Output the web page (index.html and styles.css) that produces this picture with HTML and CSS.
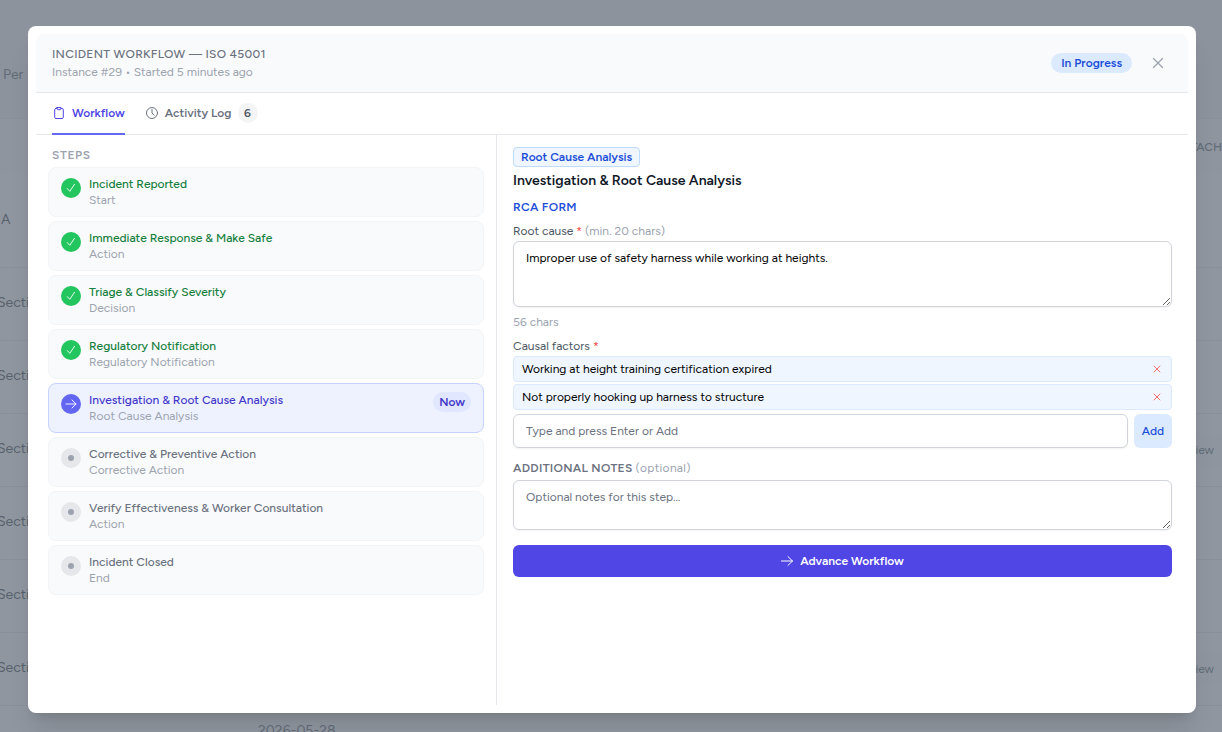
FILE: index.html
```
<!DOCTYPE html>
<html lang="en">
<head>
  <meta charset="UTF-8" />
  <meta name="viewport" content="width=device-width, initial-scale=1.0" />
  <title>Incident Workflow</title>
  <link rel="stylesheet" href="styles.css">
</head>
<body>
  <!-- Incident list behind the modal -->
  <div class="page">
    <div class="page-filters"><span>Per</span></div>
    <div class="row row-head"><span></span><span></span><span class="attach">ATTACH</span></div>
    <div class="row row-first"><span class="cell-a">A</span><span></span><span></span></div>
    <div class="row"><span class="section">Section</span><span></span><span></span></div>
    <div class="row"><span class="section">Section</span><span></span><span></span></div>
    <div class="row"><span class="section">Section</span><span></span><span class="view">View</span></div>
    <div class="row"><span class="section">Section</span><span></span><span></span></div>
    <div class="row"><span class="section">Section</span><span></span><span></span></div>
    <div class="row"><span class="section">Section</span><span></span><span class="view">View</span></div>
    <div class="row row-last"><span></span><span class="date">2026-05-28</span><span></span></div>
  </div>

  <div class="overlay">
    <div class="modal">
      <header class="modal-header">
        <div>
          <h2>Incident Workflow — ISO 45001</h2>
          <p class="meta">Instance #29 • Started 5 minutes ago</p>
        </div>
        <div class="header-right">
          <span class="status">In Progress</span>
          <button class="close" aria-label="Close">
            <svg width="12" height="12" viewBox="0 0 12 12"><path d="M1.5 1.5l9 9M10.5 1.5l-9 9" /></svg>
          </button>
        </div>
      </header>

      <nav class="tabs">
        <a class="tab active">
          <svg width="14" height="14" viewBox="0 0 14 14"><path d="M5 2.500H4a1.300 1.300 0 0 0-1.300 1.300v7.400A1.300 1.300 0 0 0 4 12.500h6a1.300 1.300 0 0 0 1.300-1.300V3.800A1.300 1.300 0 0 0 10 2.500H9M5 1.500h4v1L8.300 3.700H5.700L5 2.500z" /></svg>
          <span>Workflow</span>
        </a>
        <a class="tab">
          <svg width="14" height="14" viewBox="0 0 14 14"><circle cx="7" cy="7" r="5.500" /><path d="M7 3.500V7l2 2.200" /></svg>
          <span>Activity Log</span>
          <span class="count">6</span>
        </a>
      </nav>

      <div class="modal-body">
        <aside class="steps">
          <h3>Steps</h3>
          <ul>
            <li class="step done">
              <span class="dot"><svg width="12" height="12" viewBox="0 0 12 12"><path d="M2.300 6.600l2.500 2.700L9.500 2.300" /></svg></span>
              <div><p class="name">Incident Reported</p><p class="type">Start</p></div>
            </li>
            <li class="step done">
              <span class="dot"><svg width="12" height="12" viewBox="0 0 12 12"><path d="M2.300 6.600l2.500 2.700L9.500 2.300" /></svg></span>
              <div><p class="name">Immediate Response &amp; Make Safe</p><p class="type">Action</p></div>
            </li>
            <li class="step done">
              <span class="dot"><svg width="12" height="12" viewBox="0 0 12 12"><path d="M2.300 6.600l2.500 2.700L9.500 2.300" /></svg></span>
              <div><p class="name">Triage &amp; Classify Severity</p><p class="type">Decision</p></div>
            </li>
            <li class="step done">
              <span class="dot"><svg width="12" height="12" viewBox="0 0 12 12"><path d="M2.300 6.600l2.500 2.700L9.500 2.300" /></svg></span>
              <div><p class="name">Regulatory Notification</p><p class="type">Regulatory Notification</p></div>
            </li>
            <li class="step current">
              <span class="dot"><svg width="12" height="12" viewBox="0 0 12 12"><path d="M1 6h10M7 2l4 4-4 4" /></svg></span>
              <div><p class="name">Investigation &amp; Root Cause Analysis</p><p class="type">Root Cause Analysis</p></div>
              <span class="now">Now</span>
            </li>
            <li class="step">
              <span class="dot"></span>
              <div><p class="name">Corrective &amp; Preventive Action</p><p class="type">Corrective Action</p></div>
            </li>
            <li class="step">
              <span class="dot"></span>
              <div><p class="name">Verify Effectiveness &amp; Worker Consultation</p><p class="type">Action</p></div>
            </li>
            <li class="step">
              <span class="dot"></span>
              <div><p class="name">Incident Closed</p><p class="type">End</p></div>
            </li>
          </ul>
        </aside>

        <section class="detail">
          <span class="tag">Root Cause Analysis</span>
          <h3 class="title">Investigation &amp; Root Cause Analysis</h3>
          <h4 class="form-title">RCA Form</h4>

          <label class="label" for="rootCause">Root cause <span class="required">*</span> <span class="hint">(min. 20 chars)</span></label>
          <textarea id="rootCause" class="root-cause">Improper use of safety harness while working at heights.</textarea>
          <p class="chars">56 chars</p>

          <label class="label" for="factor">Causal factors <span class="required">*</span></label>
          <ul class="factors">
            <li>
              <span>Working at height training certification expired</span>
              <button class="remove" aria-label="Remove"><svg width="8" height="8" viewBox="0 0 8 8"><path d="M1 1l6 6M7 1L1 7" /></svg></button>
            </li>
            <li>
              <span>Not properly hooking up harness to structure</span>
              <button class="remove" aria-label="Remove"><svg width="8" height="8" viewBox="0 0 8 8"><path d="M1 1l6 6M7 1L1 7" /></svg></button>
            </li>
          </ul>
          <div class="add-row">
            <input type="text" id="factor" placeholder="Type and press Enter or Add" />
            <button class="add">Add</button>
          </div>

          <label class="notes-label" for="notes"><span class="upper">Additional Notes</span> <span class="hint">(optional)</span></label>
          <textarea id="notes" class="notes" placeholder="Optional notes for this step…"></textarea>

          <button class="advance">
            <svg width="12" height="12" viewBox="0 0 12 12"><path d="M.5 6h11M7 1.600L11.500 6 7 10.400" /></svg>
            <span>Advance Workflow</span>
          </button>
        </section>
      </div>
    </div>
  </div>
</body>
</html>
```

FILE: styles.css
```
* {
  box-sizing: border-box;
}
body {
  margin: 0;
  height: 732px;
  overflow: hidden;
  font-family: Figtree, Inter, sans-serif;
  font-size: 12px;
  line-height: 16px;
  color: #000;
}
h2, h3, h4, p, ul {
  margin: 0;
  padding: 0;
  font-size: 12px;
  list-style: none;
}
button, input, textarea {
  font: inherit;
}
button {
  border: none;
  padding: 0;
  background: none;
  cursor: pointer;
}
svg {
  fill: none;
  stroke: currentColor;
  stroke-linecap: round;
  stroke-linejoin: round;
  flex-shrink: 0;
}

/* page behind */
.page {
  height: 732px;
  overflow: hidden;
  background: #f3f4f6;
  color: #1f2937;
  font-size: 14px;
}
.page-filters {
  height: 118px;
  padding: 67px 0 0 3px;
  color: #4b5563;
}
.row {
  height: 73px;
  display: grid;
  grid-template-columns: 258px 1fr 46px;
  align-items: center;
  background: #fff;
  border-top: 1px solid #e5e7eb;
  white-space: nowrap;
}
.row-head {
  height: 56px;
  background: #f9fafb;
}
.row-first {
  height: 93px;
  padding-bottom: 2px;
  border-top: none;
}
.row-last {
  align-items: start;
  padding-top: 17px;
}
.cell-a {
  padding-left: 1px;
}
.section {
  margin: -2px 0 0 -3px;
}
.attach {
  font-size: 12px;
  font-weight: 500;
  color: #4b5563;
  justify-self: end;
}
.view {
  font-size: 12px;
  color: #4b5563;
  justify-self: end;
  margin-right: -1px;
  padding: 8px 9px;
  background: #f9fafb;
}
.date {
  color: #4b5563;
}

.overlay {
  position: absolute;
  inset: 0;
  padding: 26px 26px 19px 28px;
  background: rgba(105, 115, 127, 0.75);
}
.modal {
  height: 100%;
  padding: 8px;
  display: flex;
  flex-direction: column;
  background: #fff;
  border-radius: 8px;
  box-shadow: 0 20px 25px -5px rgba(0, 0, 0, 0.1), 0 8px 10px -6px rgba(0, 0, 0, 0.1);
}

.modal-header {
  height: 59px;
  padding: 0 16px;
  display: flex;
  align-items: center;
  justify-content: space-between;
  background: #f9fafb;
  border-bottom: 1px solid #e5e7eb;
  border-radius: 8px 8px 0 0;
}
.modal-header h2 {
  margin-bottom: 2px;
  font-weight: 500;
  color: #6b7280;
  text-transform: uppercase;
  letter-spacing: 0.3px;
}
.meta {
  color: #9ca3af;
}
.header-right {
  display: flex;
  align-items: center;
  gap: 20px;
}
.status {
  padding: 2px 10px;
  border-radius: 10px;
  background: #dbeafe;
  color: #1d4ed8;
  font-weight: 600;
}
.close {
  width: 12px;
  height: 12px;
  margin-right: 8px;
  display: flex;
  color: #9ca3af;
  stroke-width: 1.3;
}

.tabs {
  height: 42px;
  padding: 0 16px;
  display: flex;
  gap: 20px;
  border-bottom: 1px solid #e5e7eb;
}
.tab {
  height: 42px;
  display: flex;
  align-items: center;
  gap: 6px;
  border-bottom: 2px solid transparent;
  font-weight: 600;
  color: #6b7280;
}
.tab.active {
  border-color: #6366f1;
  color: #4f46e5;
}
.count {
  width: 20px;
  height: 20px;
  border-radius: 10px;
  background: #f3f4f6;
  color: #4b5563;
  line-height: 20px;
  text-align: center;
}

.modal-body {
  flex: 1;
  display: flex;
}
.steps {
  width: 461px;
  padding: 12px;
  border-right: 1px solid #e5e7eb;
}
.steps h3 {
  padding: 0 4px;
  margin-bottom: 4px;
  font-weight: 600;
  color: #9ca3af;
  text-transform: uppercase;
  letter-spacing: 0.6px;
}
.steps ul {
  display: grid;
  gap: 4px;
}
.step {
  height: 50px;
  padding: 8px 12px;
  display: flex;
  gap: 8px;
  border: 1px solid #f3f4f6;
  border-radius: 8px;
  background: #f9fafb;
}
.dot {
  width: 20px;
  height: 20px;
  margin-top: 2px;
  display: flex;
  align-items: center;
  justify-content: center;
  border-radius: 50%;
  background: #e5e7eb;
}
.dot svg {
  stroke-width: 0.9;
}
.dot:empty::before {
  content: "";
  width: 6px;
  height: 6px;
  border-radius: 50%;
  background: #9ca3af;
}
.name {
  font-weight: 500;
  color: #6b7280;
}
.type {
  color: #9ca3af;
}
.done .dot {
  background: #22c55e;
  color: #fff;
}
.done .name {
  color: #15803d;
}
.current {
  border-color: #c7d2fe;
  background: #eef2ff;
}
.current .dot {
  background: #6366f1;
  color: #fff;
}
.current .name {
  color: #4338ca;
}
.now {
  height: 20px;
  margin-left: auto;
  padding: 2px 6px;
  border-radius: 10px;
  background: #e0e7ff;
  color: #4338ca;
  font-weight: 600;
}

.detail {
  flex: 1;
  padding: 12px 16px;
  display: flex;
  flex-direction: column;
}
.tag {
  align-self: flex-start;
  height: 20px;
  padding: 1px 7px;
  border: 1px solid #bfdbfe;
  border-radius: 4px;
  background: #eff6ff;
  color: #1d4ed8;
  font-weight: 600;
}
.title {
  margin-top: 4px;
  font-size: 14px;
  line-height: 20px;
  font-weight: 600;
  color: #111827;
}
.form-title {
  margin: 8px 0;
  font-weight: 600;
  color: #1d4ed8;
  text-transform: uppercase;
  letter-spacing: 0.3px;
}
.label {
  color: #4b5563;
}
.required {
  color: #ef4444;
}
.hint {
  color: #9ca3af;
}
textarea, input {
  padding: 8px 12px;
  border: 1px solid #d1d5db;
  border-radius: 6px;
  background: #fff;
  box-shadow: 0 1px 2px rgba(0, 0, 0, 0.05);
}
textarea::placeholder, input::placeholder {
  color: #6b7280;
}
.root-cause {
  height: 66px;
  margin-top: 2px;
}
.chars {
  margin: 7px 0 8px;
  color: #9ca3af;
}
.factors {
  margin: 2px 0 4px;
  display: grid;
  gap: 2px;
}
.factors li {
  height: 26px;
  padding: 0 10px 0 8px;
  display: flex;
  align-items: center;
  justify-content: space-between;
  border: 1px solid #dbeafe;
  border-radius: 4px;
  background: #eff6ff;
}
.remove {
  display: flex;
  color: #f87171;
}
.add-row {
  display: flex;
  gap: 6px;
}
.add-row input {
  flex: 1;
  height: 34px;
}
.add {
  width: 38px;
  border-radius: 6px;
  background: #dbeafe;
  color: #1d4ed8;
  font-weight: 500;
}
.notes-label {
  margin: 12px 0 4px;
}
.upper {
  font-weight: 600;
  color: #6b7280;
  text-transform: uppercase;
  letter-spacing: 0.3px;
}
.notes-label .hint {
  letter-spacing: 0.3px;
}
.notes {
  height: 50px;
}
.advance {
  height: 32px;
  margin-top: 15px;
  display: flex;
  align-items: center;
  justify-content: center;
  gap: 7px;
  border-radius: 6px;
  background: #4f46e5;
  color: #fff;
  font-weight: 600;
}
```
